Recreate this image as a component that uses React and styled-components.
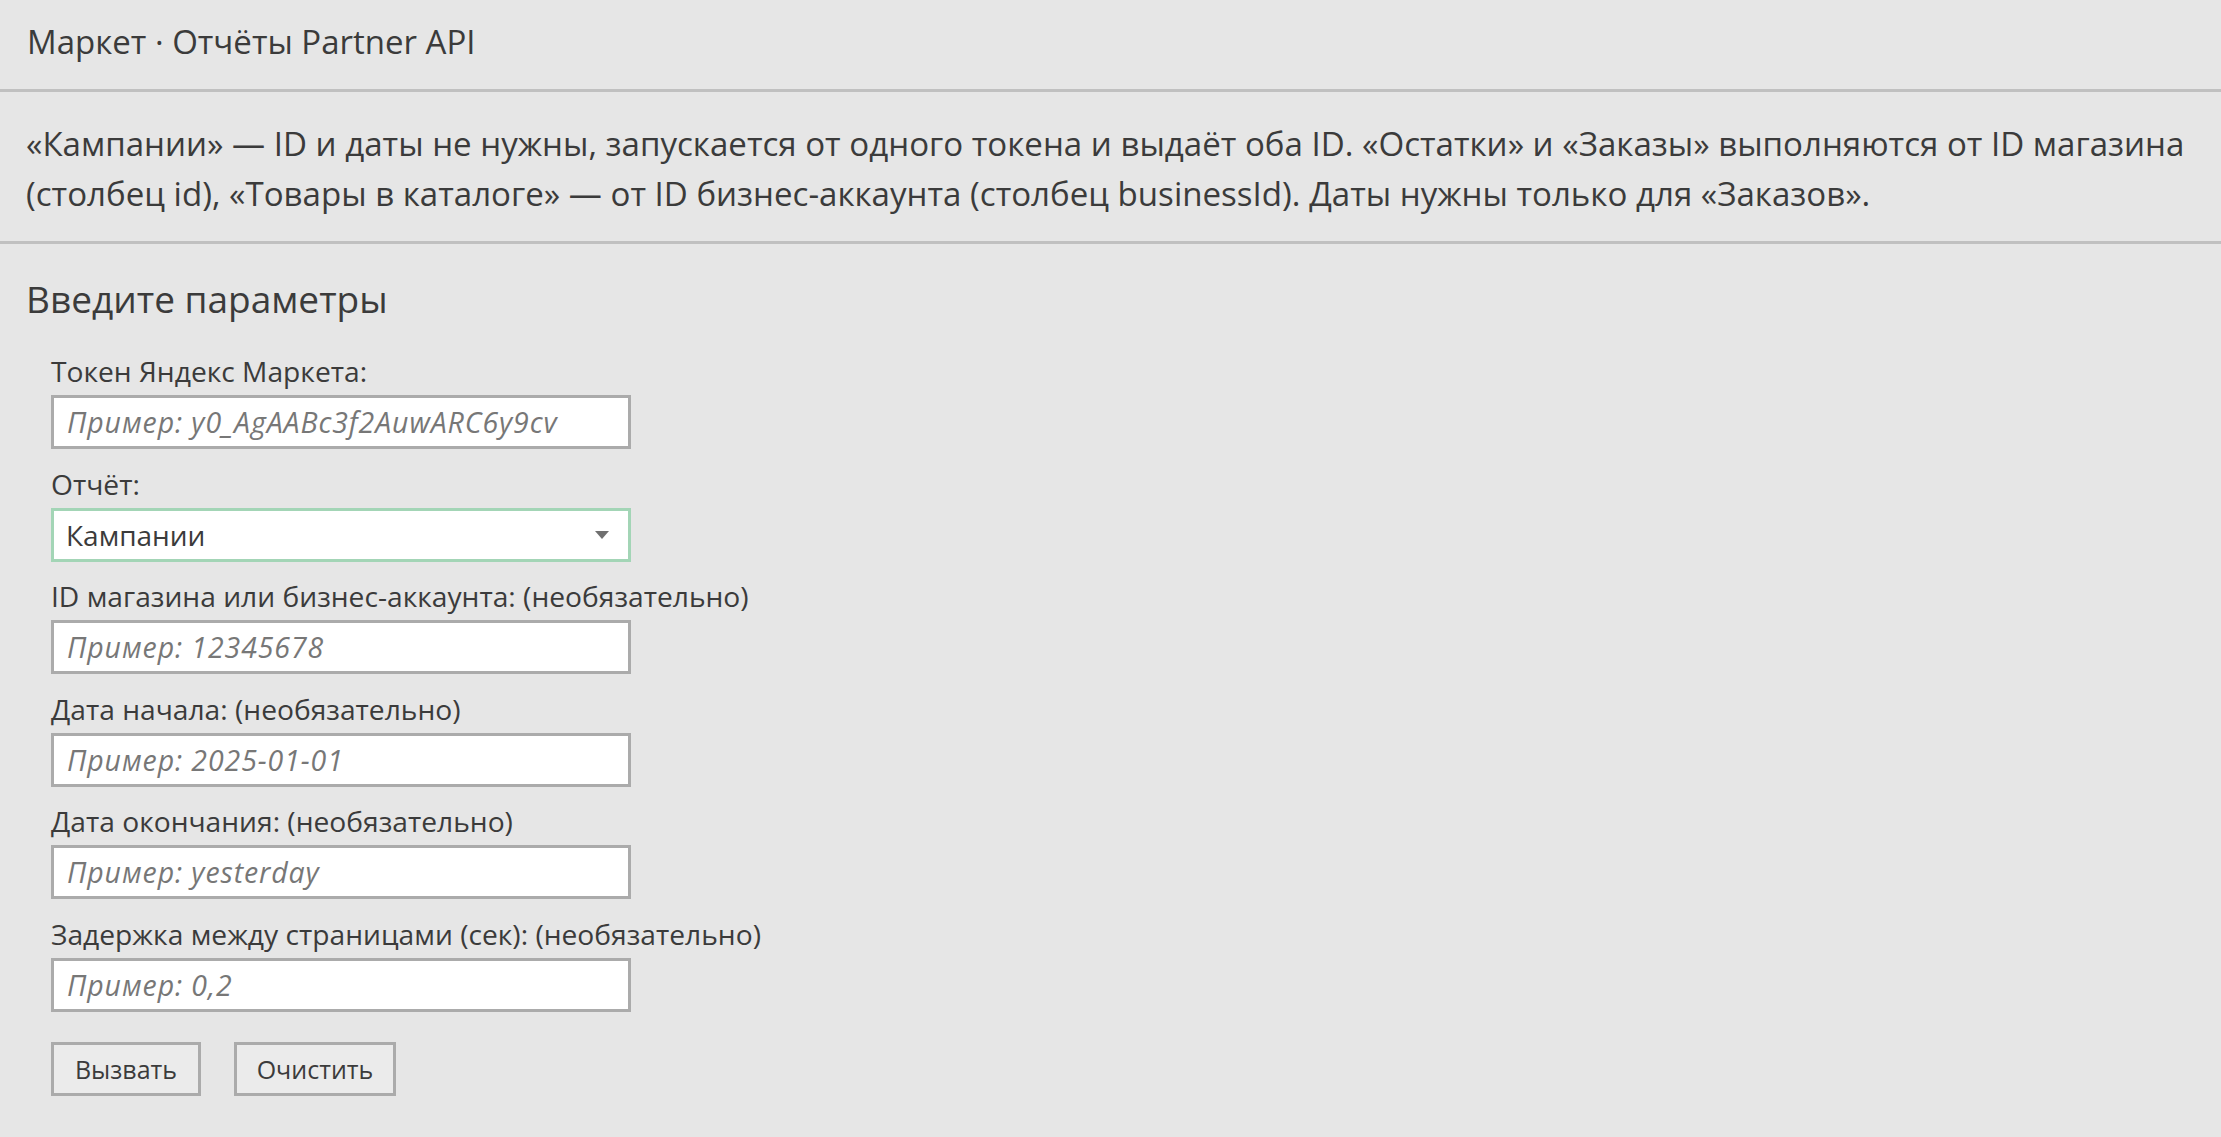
import React, { useState } from 'react';
import styled, { createGlobalStyle } from 'styled-components';

const GlobalStyle = createGlobalStyle`
  html, body {
    margin: 0;
    padding: 0;
    background: #e6e6e6;
  }
  body {
    font-family: "Open Sans", "Noto Sans", sans-serif;
    color: #3b3b3b;
  }
`;

const Page = styled.div`
  min-height: 100vh;
  background: #e6e6e6;
`;

const Header = styled.header`
  height: 92px;
  display: flex;
  align-items: center;
  padding: 0 27px 6px;
  box-sizing: border-box;
  border-bottom: 3px solid #c0c0c0;
`;

const Title = styled.h1`
  margin: 0;
  font-size: 33px;
  font-weight: 400;
  color: #3b3b3b;
`;

const Info = styled.p`
  margin: 0;
  padding: 27px 26px 22px;
  font-size: 33.1px;
  line-height: 50px;
  border-bottom: 3px solid #c0c0c0;
`;

const Section = styled.section`
  padding: 31px 26px 30px;
`;

const SectionTitle = styled.h2`
  margin: 0 0 30px;
  font-size: 37px;
  line-height: 48px;
  font-weight: 400;
`;

const Fields = styled.div`
  padding-left: 25px;
  display: flex;
  flex-direction: column;
  gap: 16.5px;
`;

const Field = styled.div`
  display: flex;
  flex-direction: column;
  gap: 6px;
`;

const Label = styled.label`
  font-size: 28.2px;
  line-height: 36px;
`;

const Input = styled.input`
  width: 580px;
  height: 54px;
  box-sizing: border-box;
  border: 3px solid #ababab;
  background: #fff;
  padding: 0 13px;
  font-family: inherit;
  font-size: 28.5px;
  color: #3b3b3b;
  outline: none;

  &::placeholder {
    font-style: italic;
    letter-spacing: 0.9px;
    color: #777;
  }
`;

const SelectBox = styled.div`
  position: relative;
  width: 580px;
  height: 54px;
  box-sizing: border-box;
  border: 3px solid #a3d5b6;
  background: #fff;
`;

const Select = styled.select`
  appearance: none;
  width: 100%;
  height: 100%;
  border: none;
  background: transparent;
  padding: 0 12px;
  font-family: inherit;
  font-size: 28px;
  color: #3b3b3b;
  outline: none;
`;

const Caret = styled.svg`
  position: absolute;
  right: 19px;
  top: 20px;
  pointer-events: none;
`;

const Actions = styled.div`
  display: flex;
  gap: 33px;
  margin-top: 14px;
`;

const Button = styled.button`
  height: 54px;
  width: ${p => p.$w}px;
  box-sizing: border-box;
  border: 3px solid #ababab;
  background: #ebebeb;
  font-family: inherit;
  font-size: 25px;
  color: #3b3b3b;
  cursor: pointer;
`;

const fields = [
  { id: 'id', label: 'ID магазина или бизнес-аккаунта: (необязательно)', hint: 'Пример: 12345678' },
  { id: 'from', label: 'Дата начала: (необязательно)', hint: 'Пример: 2025-01-01' },
  { id: 'to', label: 'Дата окончания: (необязательно)', hint: 'Пример: yesterday' },
  { id: 'delay', label: 'Задержка между страницами (сек): (необязательно)', hint: 'Пример: 0,2' },
];

export default function App() {
  const [report, setReport] = useState('campaigns');

  return (
    <Page>
      <GlobalStyle />
      <Header>
        <Title>Маркет · Отчёты Partner API</Title>
      </Header>
      <Info>
        «Кампании» — ID и даты не нужны, запускается от одного токена и выдаёт оба ID. «Остатки» и «Заказы» выполняются от ID магазина
        (столбец id), «Товары в каталоге» — от ID бизнес-аккаунта (столбец businessId). Даты нужны только для «Заказов».
      </Info>
      <Section>
        <SectionTitle>Введите параметры</SectionTitle>
        <Fields>
          <Field>
            <Label htmlFor="token">Токен Яндекс Маркета:</Label>
            <Input id="token" placeholder="Пример: y0_AgAABc3f2AuwARC6y9cv" />
          </Field>
          <Field>
            <Label htmlFor="report">Отчёт:</Label>
            <SelectBox>
              <Select id="report" value={report} onChange={e => setReport(e.target.value)}>
                <option value="campaigns">Кампании</option>
                <option value="stocks">Остатки</option>
                <option value="orders">Заказы</option>
                <option value="offers">Товары в каталоге</option>
              </Select>
              <Caret width="14" height="8" viewBox="0 0 14 8">
                <path d="M0 0h14L7 8z" fill="#707070" />
              </Caret>
            </SelectBox>
          </Field>
          {fields.map(f => (
            <Field key={f.id}>
              <Label htmlFor={f.id}>{f.label}</Label>
              <Input id={f.id} placeholder={f.hint} />
            </Field>
          ))}
          <Actions>
            <Button $w={150}>Вызвать</Button>
            <Button $w={162}>Очистить</Button>
          </Actions>
        </Fields>
      </Section>
    </Page>
  );
}
